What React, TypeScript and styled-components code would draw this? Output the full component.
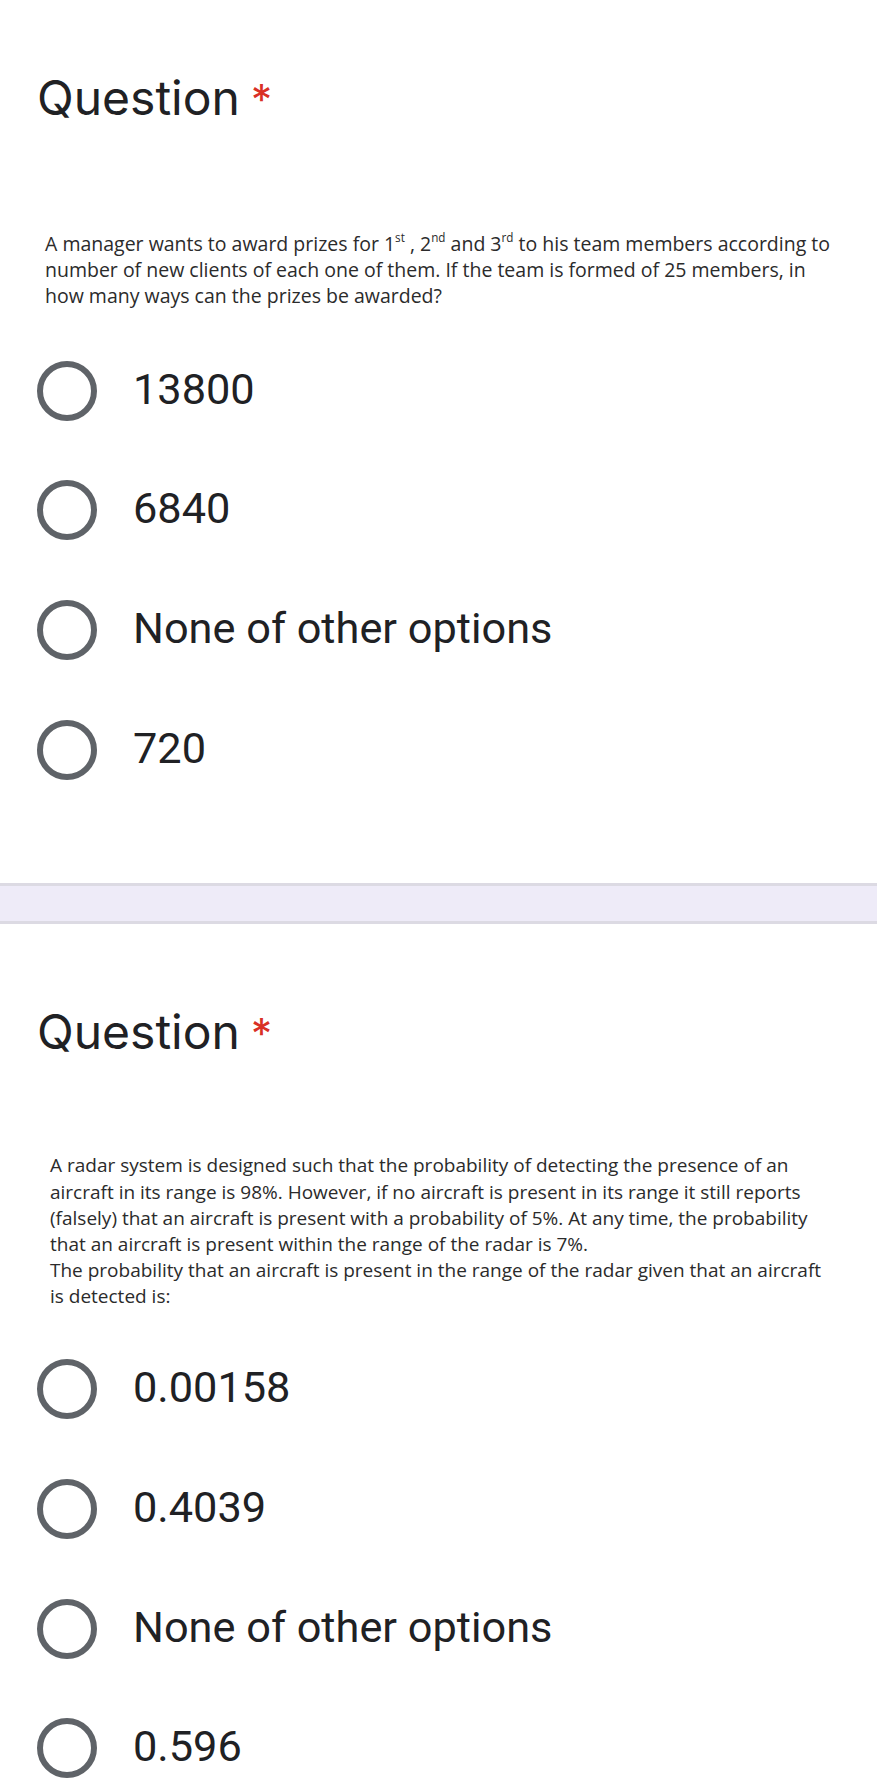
import styled, { createGlobalStyle } from "styled-components"

const GlobalStyle = createGlobalStyle`
    html, body {
        margin: 0;
        padding: 0;
        background: #ffffff;
    }
`

const Page = styled.main`
    width: 877px;
    background: #ffffff;
`

const QuestionCard = styled.section<{ $top: number }>`
    padding-top: ${p => p.$top}px;
`

const Title = styled.h2`
    margin: 0;
    padding-left: 37px;
    font-family: Inter, "Liberation Sans", sans-serif;
    font-weight: 400;
    font-size: 48px;
    line-height: 56px;
    color: #202124;
`

const Required = styled.span`
    margin-left: 11px;
    font-size: 42px;
    color: #d93025;
`

const Prompt = styled.p<{ $gap: number; $size: number; $line: number; $left: number }>`
    margin: ${p => p.$gap}px 0 0;
    padding-left: ${p => p.$left}px;
    font-family: "Open Sans", "Liberation Sans", sans-serif;
    font-size: ${p => p.$size}px;
    line-height: ${p => p.$line}px;
    color: #2b2b2b;
    white-space: nowrap;
`

const Sup = styled.sup`
    font-size: 0.6em;
    line-height: 0;
    vertical-align: 0.75em;
`

const Options = styled.div<{ $gap: number }>`
    margin-top: ${p => p.$gap}px;
    display: flex;
    flex-direction: column;
`

const Option = styled.label`
    display: flex;
    align-items: center;
    height: 119.6px;
`

const Radio = styled.span`
    box-sizing: border-box;
    flex-shrink: 0;
    width: 60px;
    height: 60px;
    margin-left: 37px;
    border: 6px solid #5f6368;
    border-radius: 50%;
`

const OptionText = styled.span`
    margin-left: 36px;
    padding-bottom: 3px;
    font-family: Roboto, "Liberation Sans", sans-serif;
    font-size: 43.3px;
    color: #202124;
`

const Divider = styled.div`
    margin-top: 74px;
    height: 35px;
    background: #eeebf8;
    border-top: 3px solid #dcdae3;
    border-bottom: 3px solid #dcdae3;
`

const firstOptions = ["13800", "6840", "None of other options", "720"]
const secondOptions = ["0.00158", "0.4039", "None of other options", "0.596"]

const App = () => {
    return <Page>
        <GlobalStyle />

        <QuestionCard $top={70}>
            <Title>Question<Required>*</Required></Title>

            <Prompt $gap={103} $size={19.5} $line={26} $left={45}>
                A manager wants to award prizes for 1<Sup>st</Sup> , 2<Sup>nd</Sup> and 3<Sup>rd</Sup> to his team members according to<br />
                number of new clients of each one of them. If the team is formed of 25 members, in<br />
                how many ways can the prizes be awarded?
            </Prompt>

            <Options $gap={22}>
                {firstOptions.map(option => (
                    <Option key={option}>
                        <Radio />
                        <OptionText>{option}</OptionText>
                    </Option>
                ))}
            </Options>
        </QuestionCard>

        <Divider />

        <QuestionCard $top={80}>
            <Title>Question<Required>*</Required></Title>

            <Prompt $gap={90} $size={19} $line={26.2} $left={50}>
                A radar system is designed such that the probability of detecting the presence of an<br />
                aircraft in its range is 98%. However, if no aircraft is present in its range it still reports<br />
                (falsely) that an aircraft is present with a probability of 5%. At any time, the probability<br />
                that an aircraft is present within the range of the radar is 7%.<br />
                The probability that an aircraft is present in the range of the radar given that an aircraft<br />
                is detected is:
            </Prompt>

            <Options $gap={20}>
                {secondOptions.map(option => (
                    <Option key={option}>
                        <Radio />
                        <OptionText>{option}</OptionText>
                    </Option>
                ))}
            </Options>
        </QuestionCard>
    </Page>
}

export default App
